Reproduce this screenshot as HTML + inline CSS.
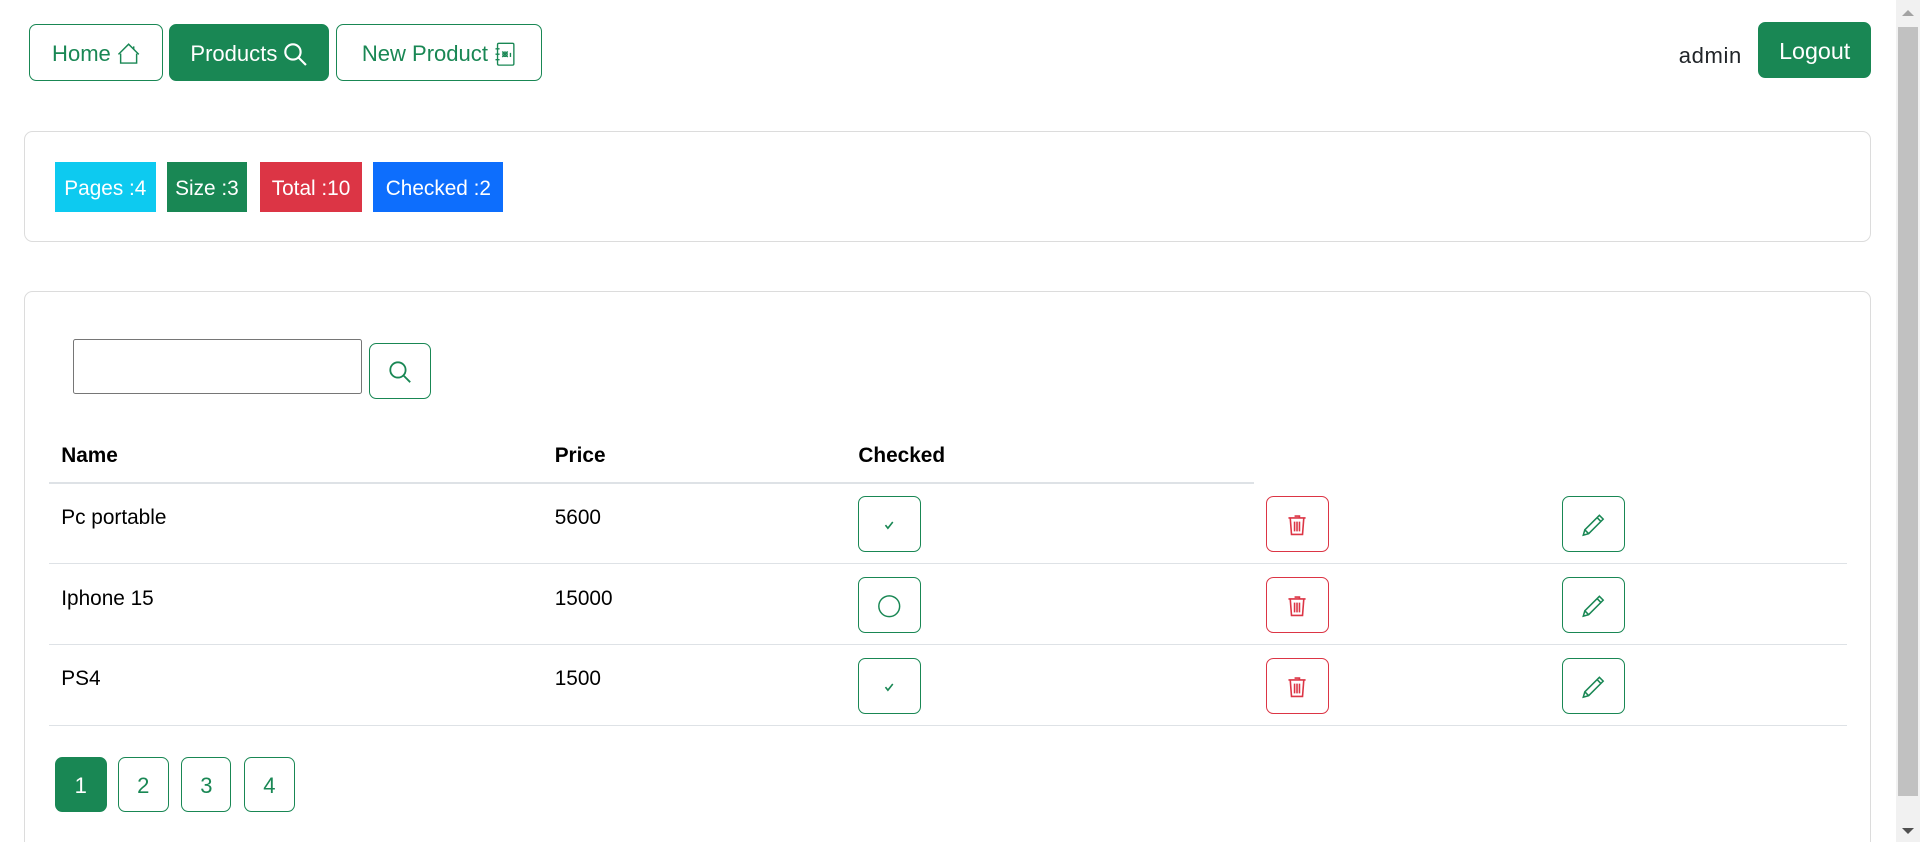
<!DOCTYPE html>
<html><head><meta charset="utf-8">
<style>
html,body{margin:0;padding:0;overflow:hidden;background:#fff}
#w{zoom:1.2245;width:1568px;height:688px;position:relative;font-family:"Liberation Sans",sans-serif;color:#212529;overflow:hidden}
.a{position:absolute;box-sizing:border-box}
.btn{position:absolute;box-sizing:border-box;border:1px solid #198754;border-radius:6px;color:#198754;display:flex;align-items:center;justify-content:center;font-size:18px;background:#fff;padding-top:2px}
.fill{background:#198754;color:#fff}
.red{border-color:#dc3545;color:#dc3545}
.card{position:absolute;border:1px solid #dcdcdc;border-radius:7px;box-sizing:border-box}
.badge{position:absolute;top:132px;height:41px;color:#fff;font-size:17px;display:flex;align-items:center;justify-content:center;padding-top:3px;box-sizing:border-box}
.t{position:absolute;font-size:17px;color:#000}
.h{font-weight:bold}
.line{position:absolute;height:1px;background:#dee2e6}
svg{display:block}
</style></head><body><div id="w">
<div class="btn" style="left:24px;top:20px;width:109px;height:46px">Home&nbsp;<svg width="19" height="19" viewBox="0 0 16 16" fill="none" stroke="#198754" stroke-width="1"><path d="M2.5 8V14.5H13.5V8M1 8.5L8 1.5L15 8.5M11.5 3V5"/></svg></div>
<div class="btn fill" style="left:138px;top:20px;width:131px;height:46px">Products&nbsp;<svg width="20" height="20" viewBox="0 0 16 16" fill="none" stroke="#fff" stroke-width="1.4"><circle cx="6.5" cy="6.5" r="5"/><path d="M10.2 10.2L15 15"/></svg></div>
<div class="btn" style="left:274px;top:20px;width:169px;height:46px">New Product&nbsp;<svg width="18" height="20" viewBox="0 0 16 18" fill="none" stroke="#198754" stroke-width="1"><rect x="2.5" y="1" width="12" height="16" rx="1"/><path d="M1 5h3M1 9h3M1 13h3M6 7l4 4M10 7l-4 4"/><circle cx="8" cy="9" r="1.6"/><path d="M12 8v3"/></svg></div>
<div class="t" style="left:1371px;top:35px;font-size:18px;color:#212529;letter-spacing:0.5px">admin</div>
<div class="btn fill" style="left:1436px;top:18px;width:92px;height:46px;font-size:19px">Logout</div>

<div class="card" style="left:20px;top:107px;width:1508px;height:91px"></div>
<div class="badge" style="left:45px;width:82px;background:#0dcaf0">Pages :4</div>
<div class="badge" style="left:136px;width:66px;background:#198754">Size :3</div>
<div class="badge" style="left:212px;width:84px;background:#dc3545">Total :10</div>
<div class="badge" style="left:305px;width:106px;background:#0d6efd">Checked :2</div>

<div class="card" style="left:20px;top:238px;width:1508px;height:470px"></div>
<div class="a" style="left:60px;top:277px;width:236px;height:45px;border:1px solid #767676;border-radius:2px"></div>
<div class="btn" style="left:301px;top:280px;width:51px;height:46px"><svg width="20" height="20" viewBox="0 0 16 16" fill="none" stroke="#198754" stroke-width="1.2"><circle cx="6.5" cy="6.5" r="5"/><path d="M10.2 10.2L14.5 14.5"/></svg></div>

<div class="t h" style="left:50px;top:363px">Name</div>
<div class="t h" style="left:453px;top:363px">Price</div>
<div class="t h" style="left:701px;top:363px">Checked</div>
<div class="line" style="left:40px;top:394px;width:984px"></div>

<div class="t" style="left:50px;top:413px">Pc portable</div>
<div class="t" style="left:453px;top:413px">5600</div>
<div class="line" style="left:40px;top:460px;width:1468px"></div>
<div class="t" style="left:50px;top:479px">Iphone 15</div>
<div class="t" style="left:453px;top:479px">15000</div>
<div class="line" style="left:40px;top:526px;width:1468px"></div>
<div class="t" style="left:50px;top:545px">PS4</div>
<div class="t" style="left:453px;top:545px">1500</div>
<div class="line" style="left:40px;top:592px;width:1468px"></div>

<div class="btn" style="left:701px;top:405px;width:51px;height:46px"><svg width="10" height="10" viewBox="0 0 10 10" fill="none" stroke="#198754" stroke-width="1.3"><path d="M2 5l2 2.5L8 2.5"/></svg></div>
<div class="btn" style="left:701px;top:471px;width:51px;height:46px"><svg width="20" height="20" viewBox="0 0 20 20" fill="none" stroke="#198754" stroke-width="1.2"><circle cx="10" cy="10" r="8.5"/></svg></div>
<div class="btn" style="left:701px;top:537px;width:51px;height:46px"><svg width="10" height="10" viewBox="0 0 10 10" fill="none" stroke="#198754" stroke-width="1.3"><path d="M2 5l2 2.5L8 2.5"/></svg></div>

<div class="btn red" style="left:1034px;top:405px;width:51px;height:46px"><svg width="18" height="20" viewBox="0 0 18 20" fill="none" stroke="#dc3545" stroke-width="1.3"><path d="M2 4h14M7 2.5h4V4M3.5 4.5l1 13h9l1-13M7 7v8M9 7v8M11 7v8"/></svg></div>
<div class="btn red" style="left:1034px;top:471px;width:51px;height:46px"><svg width="18" height="20" viewBox="0 0 18 20" fill="none" stroke="#dc3545" stroke-width="1.3"><path d="M2 4h14M7 2.5h4V4M3.5 4.5l1 13h9l1-13M7 7v8M9 7v8M11 7v8"/></svg></div>
<div class="btn red" style="left:1034px;top:537px;width:51px;height:46px"><svg width="18" height="20" viewBox="0 0 18 20" fill="none" stroke="#dc3545" stroke-width="1.3"><path d="M2 4h14M7 2.5h4V4M3.5 4.5l1 13h9l1-13M7 7v8M9 7v8M11 7v8"/></svg></div>

<div class="btn" style="left:1276px;top:405px;width:51px;height:46px"><svg width="20" height="20" viewBox="0 0 16 16" fill="none" stroke="#198754" stroke-width="1"><path d="M12 1.5l2.5 2.5L5 13.5 1.5 14.5 2.5 11zM10.5 3l2.5 2.5M2.5 11l2.5 2.5"/></svg></div>
<div class="btn" style="left:1276px;top:471px;width:51px;height:46px"><svg width="20" height="20" viewBox="0 0 16 16" fill="none" stroke="#198754" stroke-width="1"><path d="M12 1.5l2.5 2.5L5 13.5 1.5 14.5 2.5 11zM10.5 3l2.5 2.5M2.5 11l2.5 2.5"/></svg></div>
<div class="btn" style="left:1276px;top:537px;width:51px;height:46px"><svg width="20" height="20" viewBox="0 0 16 16" fill="none" stroke="#198754" stroke-width="1"><path d="M12 1.5l2.5 2.5L5 13.5 1.5 14.5 2.5 11zM10.5 3l2.5 2.5M2.5 11l2.5 2.5"/></svg></div>

<div class="btn fill" style="left:45px;top:618px;width:42px;height:45px">1</div>
<div class="btn" style="left:96px;top:618px;width:42px;height:45px">2</div>
<div class="btn" style="left:148px;top:618px;width:41px;height:45px">3</div>
<div class="btn" style="left:199px;top:618px;width:42px;height:45px">4</div>

<div class="a" style="left:1548px;top:0;width:20px;height:688px;background:#f1f1f1"></div>
<div class="a" style="left:1550px;top:22px;width:16px;height:628px;background:#c1c1c1"></div>
<div class="a" style="left:1553px;top:8px;width:0;height:0;border-left:5px solid transparent;border-right:5px solid transparent;border-bottom:5px solid #a3a3a3"></div>
<div class="a" style="left:1553px;top:676px;width:0;height:0;border-left:5px solid transparent;border-right:5px solid transparent;border-top:5px solid #505050"></div>
</div></body></html>
